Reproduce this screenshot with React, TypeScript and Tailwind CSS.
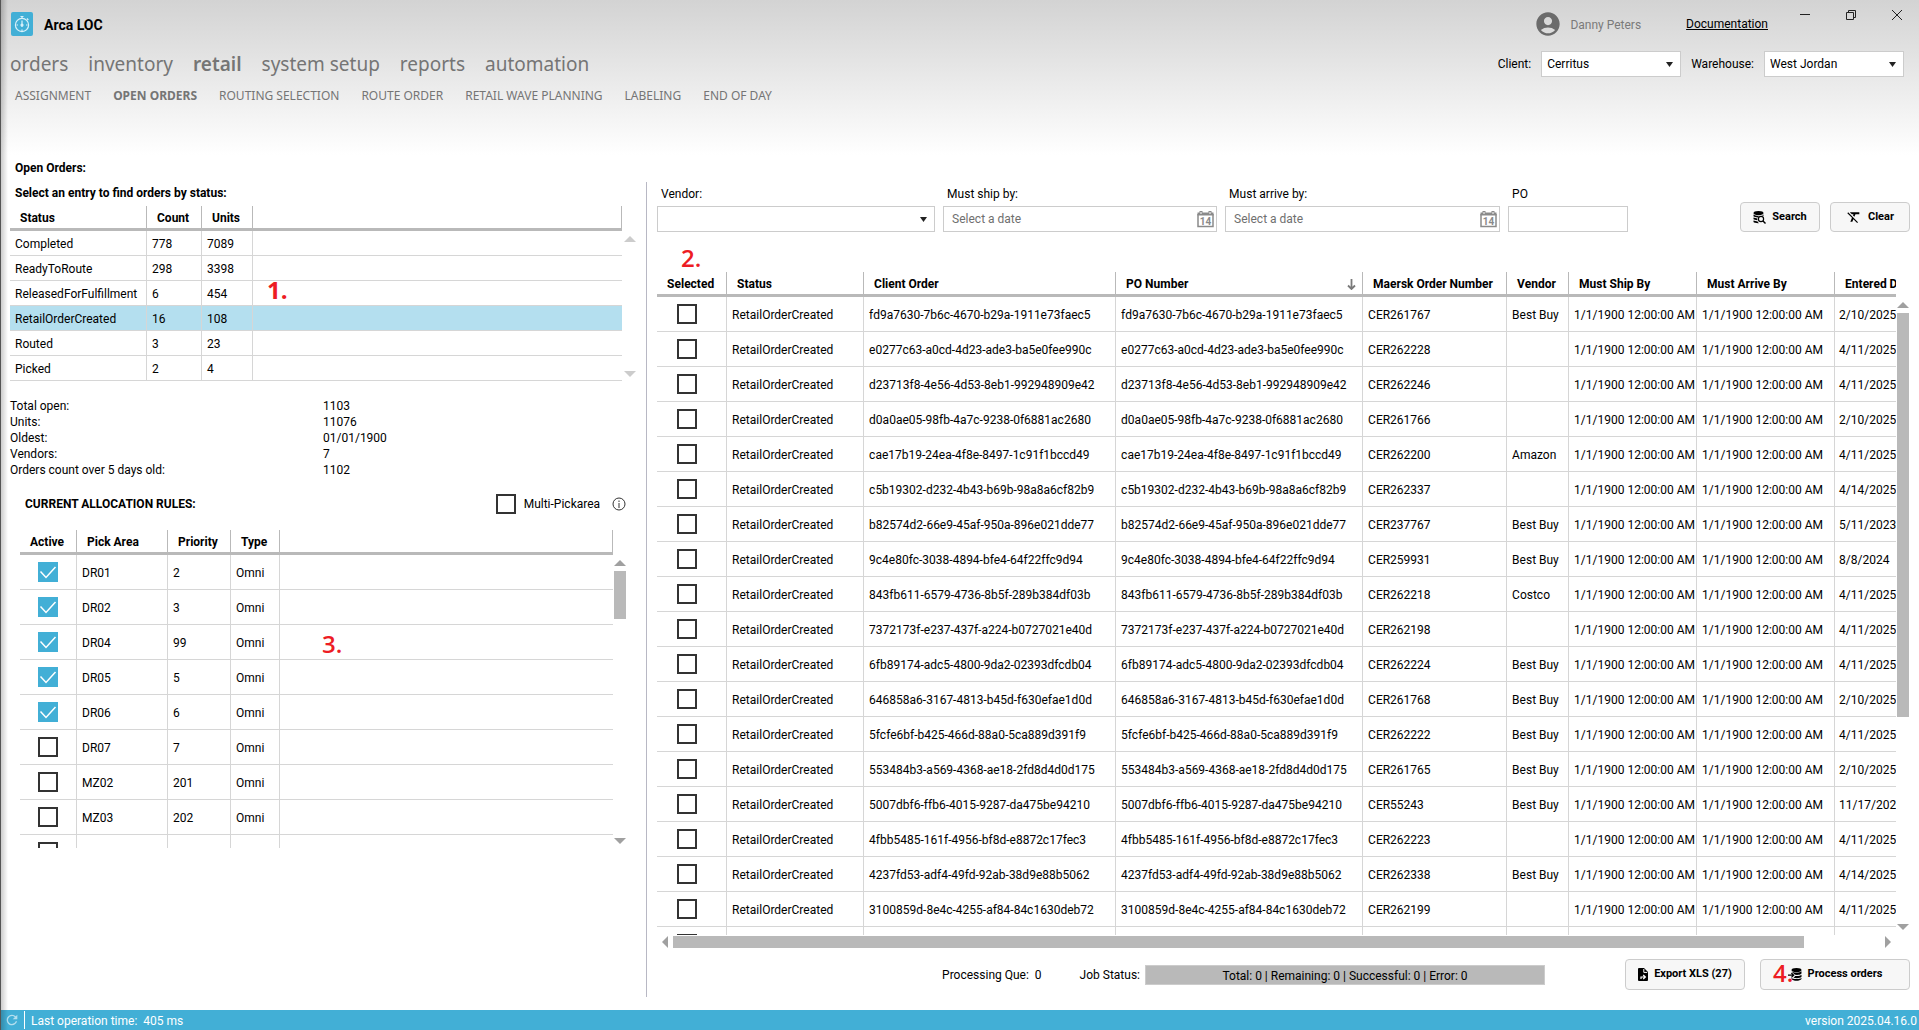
import React, { useState } from 'react';
import { MdAccountCircle, MdFormatClear, MdRefresh } from 'react-icons/md';

interface StatusRow {
  status: string;
  count: number;
  units: number;
}

interface Rule {
  area: string;
  priority: string;
  active: boolean;
}

const mainMenu = ['orders', 'inventory', 'retail', 'system setup', 'reports', 'automation'];
const subMenu = ['ASSIGNMENT', 'OPEN ORDERS', 'ROUTING SELECTION', 'ROUTE ORDER', 'RETAIL WAVE PLANNING', 'LABELING', 'END OF DAY'];

const statuses: StatusRow[] = [
  { status: 'Completed', count: 778, units: 7089 },
  { status: 'ReadyToRoute', count: 298, units: 3398 },
  { status: 'ReleasedForFulfillment', count: 6, units: 454 },
  { status: 'RetailOrderCreated', count: 16, units: 108 },
  { status: 'Routed', count: 3, units: 23 },
  { status: 'Picked', count: 2, units: 4 },
];

const totals = [
  ['Total open:', '1103'],
  ['Units:', '11076'],
  ['Oldest:', '01/01/1900'],
  ['Vendors:', '7'],
  ['Orders count over 5 days old:', '1102'],
];

const initialRules: Rule[] = [
  { area: 'DR01', priority: '2', active: true },
  { area: 'DR02', priority: '3', active: true },
  { area: 'DR04', priority: '99', active: true },
  { area: 'DR05', priority: '5', active: true },
  { area: 'DR06', priority: '6', active: true },
  { area: 'DR07', priority: '7', active: false },
  { area: 'MZ02', priority: '201', active: false },
  { area: 'MZ03', priority: '202', active: false },
];

// id (client order and PO share it), Maersk order, vendor, entered date
const orders = [
  ['fd9a7630-7b6c-4670-b29a-1911e73faec5', 'CER261767', 'Best Buy', '2/10/2025'],
  ['e0277c63-a0cd-4d23-ade3-ba5e0fee990c', 'CER262228', '', '4/11/2025'],
  ['d23713f8-4e56-4d53-8eb1-992948909e42', 'CER262246', '', '4/11/2025'],
  ['d0a0ae05-98fb-4a7c-9238-0f6881ac2680', 'CER261766', '', '2/10/2025'],
  ['cae17b19-24ea-4f8e-8497-1c91f1bccd49', 'CER262200', 'Amazon', '4/11/2025'],
  ['c5b19302-d232-4b43-b69b-98a8a6cf82b9', 'CER262337', '', '4/14/2025'],
  ['b82574d2-66e9-45af-950a-896e021dde77', 'CER237767', 'Best Buy', '5/11/2023'],
  ['9c4e80fc-3038-4894-bfe4-64f22ffc9d94', 'CER259931', 'Best Buy', '8/8/2024'],
  ['843fb611-6579-4736-8b5f-289b384df03b', 'CER262218', 'Costco', '4/11/2025'],
  ['7372173f-e237-437f-a224-b0727021e40d', 'CER262198', '', '4/11/2025'],
  ['6fb89174-adc5-4800-9da2-02393dfcdb04', 'CER262224', 'Best Buy', '4/11/2025'],
  ['646858a6-3167-4813-b45d-f630efae1d0d', 'CER261768', 'Best Buy', '2/10/2025'],
  ['5fcfe6bf-b425-466d-88a0-5ca889d391f9', 'CER262222', 'Best Buy', '4/11/2025'],
  ['553484b3-a569-4368-ae18-2fd8d4d0d175', 'CER261765', 'Best Buy', '2/10/2025'],
  ['5007dbf6-ffb6-4015-9287-da475be94210', 'CER55243', 'Best Buy', '11/17/2022'],
  ['4fbb5485-161f-4956-bf8d-e8872c17fec3', 'CER262223', '', '4/11/2025'],
  ['4237fd53-adf4-49fd-92ab-38d9e88b5062', 'CER262338', 'Best Buy', '4/14/2025'],
  ['3100859d-8e4c-4255-af84-84c1630deb72', 'CER262199', '', '4/11/2025'],
];

const th = 'border-r border-b-3 border-[#b9b9b9] h-[25px] px-2.5 pt-0.5 text-left font-bold whitespace-nowrap';
const td = 'border-r border-b border-[#d6d6d6] px-[5px] pt-0.5 whitespace-nowrap';
const tdLast = 'border-b border-[#d6d6d6] pl-1 pt-0.5 whitespace-nowrap';
const tdCheck = 'border-r border-b border-[#d6d6d6] text-center';
const btn = 'flex items-center justify-center gap-1.5 rounded border border-[#cccccc] bg-[#f7f7f7] text-[11px] font-bold hover:bg-gray-200';
const field = 'h-[26px] w-full border border-[#cccccc] bg-white text-xs outline-none focus:border-[#42afd6]';

function Checkbox({ label, id, checked, onChange }: { label?: string; id?: string; checked?: boolean; onChange?: () => void }) {
  return (
    <span className="inline-grid size-5 align-middle">
      <input
        id={id}
        type="checkbox"
        aria-label={label}
        checked={checked}
        onChange={onChange}
        className="peer col-start-1 row-start-1 size-5 appearance-none border-2 border-[#333333] bg-white checked:border-[#42afd6] checked:bg-[#42afd6]"
      />
      <svg viewBox="0 0 20 20" className="pointer-events-none invisible col-start-1 row-start-1 size-5 peer-checked:visible" fill="none" stroke="white" strokeWidth="1.5">
        <path d="M2.5 9.5 L8 15.5 L17.5 5" />
      </svg>
    </span>
  );
}

function Arrow({ dir, light }: { dir: 'up' | 'down' | 'left' | 'right'; light?: boolean }) {
  const points = { up: '0,6 6,0 12,6', down: '0,0 12,0 6,6', left: '6,0 6,12 0,6', right: '0,0 6,6 0,12' }[dir];
  const vertical = dir === 'up' || dir === 'down';
  return (
    <svg width={vertical ? 12 : 6} height={vertical ? 6 : 12} className="shrink-0" fill={light ? '#cccccc' : '#a0a0a0'}>
      <polygon points={points} />
    </svg>
  );
}

function Dropdown({ id, options }: { id: string; options: string[] }) {
  return (
    <div className="relative w-full">
      <select id={id} className={field + ' appearance-none pr-6 pl-[5px]'}>
        {options.map(o => <option key={o}>{o}</option>)}
      </select>
      <svg width="7" height="5" className="pointer-events-none absolute top-[11px] right-2" fill="#222222">
        <polygon points="0,0 7,0 3.5,5" />
      </svg>
    </div>
  );
}

function DateField({ id }: { id: string }) {
  return (
    <div className="relative w-full">
      <input id={id} type="text" placeholder="Select a date" className={field + ' px-2 placeholder:text-[#6f6f6f]'} />
      <button aria-label="Open calendar" className="absolute top-1 right-[3px]">
        <svg width="17" height="18" viewBox="0 0 17 18" fill="none" stroke="#8a8a8a">
          <path d="M1 4 V16.5 H16 V4" strokeWidth="1.5" />
          <path d="M0.5 4 H16.5" strokeWidth="3" />
          <path d="M4 1 V5 M13 1 V5" strokeWidth="3" />
          <path d="M4 2 V4 M13 2 V4" stroke="#ffffff" strokeWidth="1" />
          <text x="8.5" y="14.5" textAnchor="middle" fontSize="10" fontWeight="700" stroke="none" fill="#8a8a8a">14</text>
        </svg>
      </button>
    </div>
  );
}

function Header() {
  return (
    <header className="min-h-[155px] bg-linear-to-b from-[#d3d3d3] to-white pr-[15px] pl-[10px]">
      <div className="flex h-12 items-center">
        <svg width="22" height="24" viewBox="0 0 22 24" className="mr-[11px] ml-px">
          <rect width="22" height="24" rx="2" fill="#42afd6" />
          <g fill="none" stroke="#d9f1fa" strokeWidth="1.2">
            <circle cx="11" cy="13" r="6.6" />
            <path d="M9.5 4.5 H12.5 M11 4.5 V6 M16 6.5 L17.3 8 M11 8.5 V15" />
            <path d="M5.5 13 H7 M15 13 H16.5 M11 17.5 V19" />
            <circle cx="11" cy="13" r="1" fill="#d9f1fa" />
          </g>
        </svg>
        <h1 className="pt-0.5 text-sm font-bold">Arca LOC</h1>
        <div className="ml-auto flex items-center">
          <MdAccountCircle className="mr-2 size-7 text-[#6b6b6b]" />
          <span className="pt-0.5 text-xs text-[#7a7a7a]">Danny Peters</span>
          <a href="#docs" className="ml-[45px] text-xs underline">Documentation</a>
        </div>
        <div className="ml-8 flex h-full items-start gap-9 pt-2.5">
          <button aria-label="Minimize">
            <svg width="10" height="10" stroke="#222222"><path d="M0 4.5 H10" /></svg>
          </button>
          <button aria-label="Restore">
            <svg width="10" height="10" fill="none" stroke="#222222"><path d="M0.5 2.5 H7.5 V9.5 H0.5 Z M2.5 2.5 V0.5 H9.5 V7.5 H7.5" /></svg>
          </button>
          <button aria-label="Close" className="mr-[2px]">
            <svg width="10" height="10" stroke="#222222"><path d="M0 0 L10 10 M10 0 L0 10" /></svg>
          </button>
        </div>
      </div>
      <div className="flex h-8 items-center justify-between">
        <nav className="flex gap-5 font-['Noto_Sans',sans-serif] text-[19px] text-[#757575]">
          {mainMenu.map(m => (
            <a key={m} href={'#' + m} className={m === 'retail' ? 'font-semibold' : ''}>{m}</a>
          ))}
        </nav>
        <div className="flex items-center text-xs">
          <label htmlFor="client" className="mr-2.5">Client:</label>
          <div className="w-[140px]"><Dropdown id="client" options={['Cerritus']} /></div>
          <label htmlFor="warehouse" className="mr-2.5 ml-2.5">Warehouse:</label>
          <div className="w-[140px]"><Dropdown id="warehouse" options={['West Jordan']} /></div>
        </div>
      </div>
      <nav className="flex h-8 items-center gap-[22px] pl-[5px] font-['Noto_Sans',sans-serif] text-xs text-[#757575]">
        {subMenu.map(m => (
          <a key={m} href={'#' + m} className={m === 'OPEN ORDERS' ? 'font-bold' : ''}>{m}</a>
        ))}
      </nav>
    </header>
  );
}

function StatusPanel() {
  const [selected, setSelected] = useState('RetailOrderCreated');

  return (
    <section className="pl-[10px] text-xs">
      <h2 className="pl-[5px] leading-[26px] font-bold">Open Orders:</h2>
      <h3 className="pl-[5px] leading-[25px] font-bold">Select an entry to find orders by status:</h3>
      <div className="relative flex gap-[2px] pr-px">
        <table className="w-full table-fixed border-separate border-spacing-0">
          <thead>
            <tr>
              <th className={th + ' w-[137px]'}>Status</th>
              <th className={th + ' w-[55px]'}>Count</th>
              <th className={th + ' w-[51px]'}>Units</th>
              <th className={th} aria-label="Blank"></th>
            </tr>
          </thead>
          <tbody>
            {statuses.map(s => (
              <tr key={s.status} onClick={() => setSelected(s.status)} className={s.status === selected ? 'h-[25px] bg-[#b4dfef]' : 'h-[25px]'}>
                <td className={td}>{s.status}</td>
                <td className={td}>{s.count}</td>
                <td className={td}>{s.units}</td>
                <td className={tdLast}></td>
              </tr>
            ))}
          </tbody>
        </table>
        <div className="flex flex-col justify-between pt-[30px] pb-1">
          <Arrow dir="up" light />
          <Arrow dir="down" light />
        </div>
        <span className="absolute top-17 left-[257px] font-['Open_Sans',sans-serif] text-2xl font-bold text-[#ed1c24]">1.</span>
      </div>
      <dl className="mt-[17px] grid grid-cols-[313px_1fr] leading-4">
        {totals.map(([label, value]) => (
          <React.Fragment key={label}>
            <dt>{label}</dt>
            <dd>{value}</dd>
          </React.Fragment>
        ))}
      </dl>
    </section>
  );
}

function RulesPanel() {
  const [rules, setRules] = useState<Rule[]>(initialRules);
  const [multi, setMulti] = useState(false);

  const toggle = (i: number) => setRules(rules.map((r, n) => (n === i ? { ...r, active: !r.active } : r)));

  return (
    <section className="mt-4 pr-[11px] pl-5 text-xs">
      <div className="flex items-center pl-[5px]">
        <h3 className="mr-auto font-bold">CURRENT ALLOCATION RULES:</h3>
        <Checkbox id="multi" checked={multi} onChange={() => setMulti(!multi)} />
        <label htmlFor="multi" className="ml-2">Multi-Pickarea</label>
        <svg width="14" height="14" className="ml-3" fill="none" stroke="#333333">
          <circle cx="7" cy="7" r="6" />
          <path d="M7 6 V11 M7 3.5 V5" />
        </svg>
      </div>
      <div className="relative mt-4 flex h-[318px] overflow-hidden">
        <table className="h-fit w-full table-fixed border-separate border-spacing-0">
          <thead>
            <tr>
              <th className={th + ' w-[57px]'}>Active</th>
              <th className={th + ' w-[91px]'}>Pick Area</th>
              <th className={th + ' w-[63px]'}>Priority</th>
              <th className={th + ' w-[49px]'}>Type</th>
              <th className={th} aria-label="Blank"></th>
            </tr>
          </thead>
          <tbody>
            {rules.map((r, i) => (
              <tr key={r.area} className="h-[35px]">
                <td className={tdCheck}><Checkbox label={r.area + ' active'} checked={r.active} onChange={() => toggle(i)} /></td>
                <td className={td}>{r.area}</td>
                <td className={td}>{r.priority}</td>
                <td className={td}>Omni</td>
                <td className={tdLast}></td>
              </tr>
            ))}
            <tr className="h-[35px]">
              <td className={tdCheck}><Checkbox label="Next rule active" /></td>
              <td className={td}></td>
              <td className={td}></td>
              <td className={td}></td>
              <td></td>
            </tr>
          </tbody>
        </table>
        <div className="flex flex-col pt-[30px] pb-1 pl-px">
          <Arrow dir="up" />
          <div className="mt-[5px] mb-auto h-12 w-3 bg-[#b9b9b9]" />
          <Arrow dir="down" />
        </div>
        <span className="absolute top-[98px] left-[302px] font-['Open_Sans',sans-serif] text-2xl font-semibold text-[#ed1c24]">3.</span>
      </div>
    </section>
  );
}

function Filters() {
  return (
    <div className="flex items-end gap-2 text-xs">
      <div className="w-[278px]">
        <label htmlFor="vendor" className="block pl-1 leading-6">Vendor:</label>
        <Dropdown id="vendor" options={['']} />
      </div>
      <div className="w-[274px]">
        <label htmlFor="ship" className="block pl-1 leading-6">Must ship by:</label>
        <DateField id="ship" />
      </div>
      <div className="w-[275px]">
        <label htmlFor="arrive" className="block pl-1 leading-6">Must arrive by:</label>
        <DateField id="arrive" />
      </div>
      <div className="w-[120px]">
        <label htmlFor="po" className="block pl-1 leading-6">PO</label>
        <input id="po" type="text" className={field + ' px-1.5'} />
      </div>
      <button className={btn + ' mr-0.5 ml-auto h-[30px] w-20'}>
        <svg width="13" height="13" viewBox="0 0 13 13">
          <ellipse cx="5.5" cy="2" rx="5" ry="2" />
          <path d="M0.5 3.5 C2 5.3 9 5.3 10.5 3.5 V5 C8 3.8 5.5 5 4.8 6.4 C3 6.3 1.2 6 0.5 5.2 Z" />
          <path d="M0.5 6.5 L4.3 7.4 V9.2 C2.5 9 1.2 8.7 0.5 8.2 Z M0.5 9.5 L4.6 10.4 L5.8 12.2 C3 12.3 1 11.7 0.5 11 Z" />
          <circle cx="8" cy="8" r="2.6" fill="none" stroke="black" strokeWidth="1.2" />
          <path d="M10 10 L12.5 12.5" stroke="black" strokeWidth="1.4" />
        </svg>
        Search
      </button>
      <button className={btn + ' h-[30px] w-20'}>
        <MdFormatClear className="size-4" />
        Clear
      </button>
    </div>
  );
}

function OrdersGrid() {
  const [picked, setPicked] = useState<string[]>([]);

  const toggle = (id: string) => setPicked(picked.includes(id) ? picked.filter(p => p !== id) : [...picked, id]);

  return (
    <div className="mt-10 text-xs">
      <div className="relative flex">
        <span className="absolute -top-[30px] left-6 font-['Open_Sans',sans-serif] text-2xl font-semibold text-[#ed1c24]">2.</span>
        <div className="h-[663px] min-w-0 flex-1 overflow-hidden">
          <table className="w-[1360px] table-fixed border-separate border-spacing-0">
            <thead>
              <tr>
                <th className={th + ' w-[70px]'}>Selected</th>
                <th className={th + ' w-[137px]'}>Status</th>
                <th className={th + ' w-[252px]'}>Client Order</th>
                <th className={th + ' w-[247px]'}>
                  <div className="flex items-center justify-between">
                    PO Number
                    <svg width="9" height="11" fill="none" stroke="#7a7a7a" strokeWidth="1.8" className="-mr-1"><path d="M4.5 0 V10 M1 6.5 L4.5 10 L8 6.5" /></svg>
                  </div>
                </th>
                <th className={th + ' w-[144px]'}>Maersk Order Number</th>
                <th className={th + ' w-[62px]'}>Vendor</th>
                <th className={th + ' w-[128px]'}>Must Ship By</th>
                <th className={th + ' w-[138px]'}>Must Arrive By</th>
                <th className={th}>Entered Date</th>
              </tr>
            </thead>
            <tbody>
              {orders.map(([id, maersk, vendor, entered]) => (
                <tr key={id} className="h-[35px]">
                  <td className={tdCheck + ' pr-2.5'}><Checkbox label={'Select ' + id} checked={picked.includes(id)} onChange={() => toggle(id)} /></td>
                  <td className={td}>RetailOrderCreated</td>
                  <td className={td}>{id}</td>
                  <td className={td}>{id}</td>
                  <td className={td}>{maersk}</td>
                  <td className={td}>{vendor}</td>
                  <td className={td}>1/1/1900 12:00:00 AM</td>
                  <td className={td}>1/1/1900 12:00:00 AM</td>
                  <td className={tdLast}>{entered}</td>
                </tr>
              ))}
              <tr className="h-[35px]">
                <td className={tdCheck + ' pr-2.5'}><Checkbox label="Select next order" /></td>
                {[1, 2, 3, 4, 5, 6, 7, 8].map(n => <td key={n} className={td}></td>)}
              </tr>
            </tbody>
          </table>
        </div>
        <div className="flex flex-col pt-[30px] pr-px pb-[5px] pl-px">
          <Arrow dir="up" />
          <div className="mt-[5px] mb-auto h-[404px] w-3 bg-[#b9b9b9]" />
          <Arrow dir="down" />
        </div>
      </div>
      <div className="mt-px flex items-center gap-[5px] pr-[19px] pl-[5px]">
        <Arrow dir="left" />
        <div className="flex-1"><div className="h-3 w-[93.7%] bg-[#b9b9b9]" /></div>
        <Arrow dir="right" />
      </div>
    </div>
  );
}

function ActionBar() {
  return (
    <div className="mt-[11px] flex items-center text-xs">
      <span className="ml-auto">Processing Que:&nbsp; 0</span>
      <span className="ml-[38px]">Job Status:</span>
      <div role="status" className="ml-[5px] h-5 w-[400px] border border-[#cccccc] bg-[#b9b9b9] text-center leading-5">
        Total: 0 | Remaining: 0 | Successful: 0 | Error: 0
      </div>
      <button className={btn + ' ml-20 h-[31px] w-[120px]'}>
        <svg width="10" height="13" viewBox="0 0 10 13">
          <path d="M0 1 Q0 0 1 0 H6 L10 4 V12 Q10 13 9 13 H1 Q0 13 0 12 Z" />
          <path d="M5.8 1 V4.4 H9.2" fill="none" stroke="white" />
          <path d="M3 11 V9 H6.5 M5.2 7 L7.4 9 L5.2 11" fill="none" stroke="white" strokeWidth="1.2" />
        </svg>
        Export XLS (27)
      </button>
      <button className={btn + ' relative ml-[15px] h-[31px] w-[150px]'}>
        <svg width="14" height="13" viewBox="0 0 14 13">
          <ellipse cx="8.5" cy="2" rx="5" ry="2" />
          <path d="M3.5 3.3 C5 5 12 5 13.5 3.3 V5.5 C12 7.2 8.5 7 7 6.8 L4.8 4.8 Z" />
          <path d="M13.5 6.8 V9 C12 10.3 8 10.4 5.5 9.7 L7.3 8 C9.5 8.3 12.5 8 13.5 6.8 Z" />
          <path d="M3.5 9.9 C5 11.4 12 11.4 13.5 9.9 V11 C12 13.4 5 13.4 3.5 11 Z" />
          <path d="M0 7.2 H5.5 M3.4 5 L5.7 7.2 L3.4 9.4" fill="none" stroke="black" strokeWidth="1.2" />
        </svg>
        Process orders
        <span className="absolute -top-[3px] left-3 font-['Open_Sans',sans-serif] text-2xl font-semibold text-[#ed1c24]">4.</span>
      </button>
    </div>
  );
}

export default function App() {
  return (
    <div className="relative flex min-h-screen flex-col overflow-hidden bg-white font-[Roboto,'Noto_Sans',sans-serif] text-black">
      <Header />
      <main className="flex flex-1">
        <div className="w-[33.2%] shrink-0">
          <StatusPanel />
          <RulesPanel />
        </div>
        <div className="mt-[27px] mb-[13px] ml-[9px] min-w-0 flex-1 border-l border-[#b8b8c4] pr-[9px] pl-[10px]">
          <Filters />
          <OrdersGrid />
          <ActionBar />
        </div>
      </main>
      <footer className="flex h-5 items-center bg-[#42afd6] pr-[2px] pl-1 text-xs text-white">
        <MdRefresh className="size-4 opacity-60" />
        <span className="ml-1 border-l border-white pt-0.5 pl-1.5">Last operation time:&nbsp; 405 ms</span>
        <span className="ml-auto pt-0.5">version 2025.04.16.0</span>
      </footer>
      <div className="pointer-events-none absolute inset-y-0 left-0 w-2 border-l border-[#555555] bg-linear-to-r from-black/20 to-transparent" />
    </div>
  );
}
